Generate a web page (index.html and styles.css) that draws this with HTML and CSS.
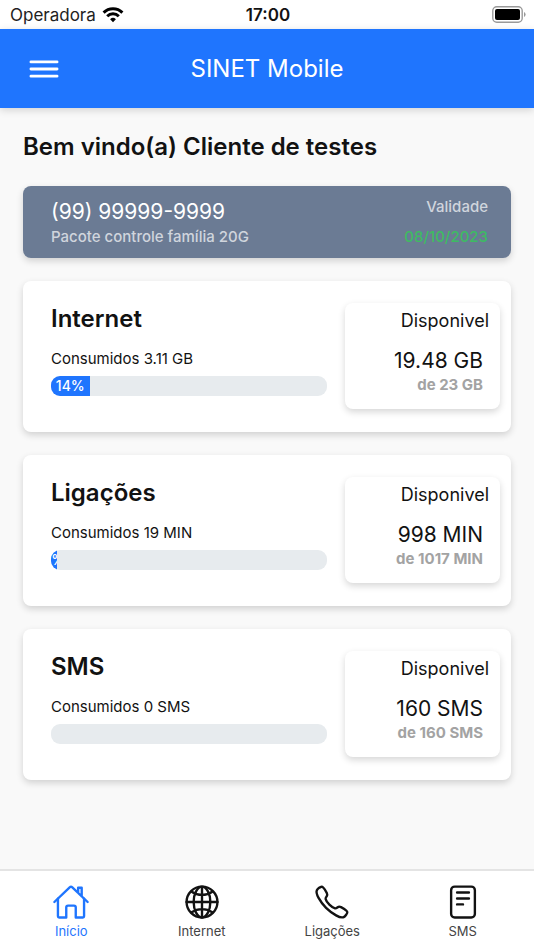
FILE: index.html
```html
<!DOCTYPE html>
<html lang="pt-BR">
<head>
<meta charset="utf-8">
<meta name="viewport" content="width=device-width, initial-scale=1">
<title>SINET Mobile</title>
<link rel="stylesheet" href="styles.css">
</head>
<body>
<div class="status">
  <span class="carrier">Operadora
    <svg class="wifi" viewBox="0 0 22 16" aria-hidden="true"><path d="M1.6 5.6a13.4 13.4 0 0 1 18.8 0M5.2 9.2a8.3 8.3 0 0 1 11.6 0"/><path class="dot" d="M11 15.2l-2.9-2.9a4.1 4.1 0 0 1 5.8 0z"/></svg>
  </span>
  <time class="clock">17:00</time>
  <svg class="battery" viewBox="0 0 34 17" aria-hidden="true"><rect class="shell" x="0.8" y="0.8" width="29.4" height="15.4" rx="4"/><rect x="3" y="3" width="25" height="11" rx="2"/><path class="cap" d="M32 6v5q1.6-.6 1.6-2.5T32 6z"/></svg>
</div>
<header class="toolbar">
  <button class="menu" type="button" aria-label="Menu"><svg class="icon" viewBox="0 0 512 512" aria-hidden="true"><path d="M80 160h352M80 256h352M80 352h352"/></svg></button>
  <h1>SINET Mobile</h1>
</header>
<main>
  <h2 class="welcome">Bem vindo(a) Cliente de testes</h2>
  <section class="plan">
    <div><p class="phone">(99) 99999-9999</p><p class="package">Pacote controle família 20G</p></div>
    <div class="validity"><p>Validade</p><p class="date">08/10/2023</p></div>
  </section>
  <section class="card">
    <div class="usage">
      <h2>Internet</h2>
      <p>Consumidos 3.11 GB</p>
      <div class="track"><div class="bar" style="width:14%"><span>14%</span></div></div>
    </div>
    <div class="available"><p class="label">Disponivel</p><p class="amount">19.48 GB</p><p class="total">de 23 GB</p></div>
  </section>
  <section class="card">
    <div class="usage">
      <h2>Ligações</h2>
      <p>Consumidos 19 MIN</p>
      <div class="track"><div class="bar" style="width:2%"><span>2%</span></div></div>
    </div>
    <div class="available"><p class="label">Disponivel</p><p class="amount">998 MIN</p><p class="total">de 1017 MIN</p></div>
  </section>
  <section class="card">
    <div class="usage">
      <h2>SMS</h2>
      <p>Consumidos 0 SMS</p>
      <div class="track"></div>
    </div>
    <div class="available"><p class="label">Disponivel</p><p class="amount">160 SMS</p><p class="total">de 160 SMS</p></div>
  </section>
</main>
<nav class="tabs">
  <a class="active" href="#inicio" aria-current="page"><svg class="icon" viewBox="0 0 512 512" aria-hidden="true"><path d="M80 212v236a16 16 0 0016 16h96V328a24 24 0 0124-24h80a24 24 0 0124 24v136h96a16 16 0 0016-16V212"/><path d="M480 256L266.89 52c-5-5.28-16.69-5.34-21.78 0L32 256M400 179V64h-48v69"/></svg>Início</a>
  <a href="#internet"><svg class="icon" viewBox="0 0 512 512" aria-hidden="true"><circle cx="256" cy="256" r="208"/><path d="M256 48c-58.07 0-112.67 93.31-112.67 208S197.93 464 256 464s112.67-93.31 112.67-208S314.07 48 256 48zM117.33 117.33c38.24 27.15 86.38 43.34 138.67 43.34s100.43-16.19 138.67-43.34M394.67 394.67c-38.24-27.15-86.38-43.34-138.67-43.34s-100.43 16.19-138.67 43.34M256 48v416M464 256H48"/></svg>Internet</a>
  <a href="#ligacoes"><svg class="icon" viewBox="0 0 512 512" aria-hidden="true"><path d="M451 374c-15.88-16-54.34-39.35-73-48.76-24.3-12.24-26.3-13.24-45.4.95-12.74 9.47-21.21 17.93-36.12 14.75s-47.31-21.11-75.68-49.39-47.34-61.62-50.53-76.48 5.41-23.23 14.79-36c13.22-18 12.22-21 .92-45.3-8.81-18.9-32.84-57-48.9-72.8C119.9 44 119.9 47 108.83 51.6A160.15 160.15 0 0083 65.37C67 76 58.12 84.83 51.91 98.1s-9 44.38 23.07 102.64 54.57 88.05 101.14 134.49S258.5 406.64 310.85 436c64.76 36.27 89.6 29.2 102.91 23s22.18-15 32.83-31a159.09 159.09 0 0013.8-25.8C465 391.17 468 391.17 451 374z"/></svg>Ligações</a>
  <a href="#sms"><svg class="icon" viewBox="0 0 512 512" aria-hidden="true"><rect x="96" y="48" width="320" height="416" rx="48"/><path d="M176 128h160M176 208h160M176 288h80"/></svg>SMS</a>
</nav>
</body>
</html>
```
FILE: styles.css
```css
* { box-sizing: border-box; margin: 0; padding: 0; }

body {
  display: flex;
  flex-direction: column;
  min-height: 100vh;
  background: #f9f9f9;
  color: #121212;
  font-family: Inter, "Liberation Sans", sans-serif;
}

.status {
  display: grid;
  grid-template-columns: 1fr auto 1fr;
  align-items: center;
  height: 29px;
  padding: 0 8px 0 10px;
  background: #fff;
  font-size: 17px;
}
.carrier { display: flex; align-items: center; gap: 6px; color: #222; }
.wifi { width: 22px; height: 16px; fill: none; stroke: #000; stroke-width: 3; }
.wifi .dot { fill: #000; stroke: none; }
.clock { font-weight: 600; }
.battery { width: 34px; height: 17px; justify-self: end; }
.battery .shell { fill: none; stroke: #999; stroke-width: 1.4; }
.battery .cap { fill: #999; }

.toolbar {
  display: grid;
  grid-template-columns: 1fr auto 1fr;
  align-items: center;
  height: 79px;
  padding: 0 25px;
  background: #1f75fe;
  color: #fff;
  box-shadow: 0 2px 8px rgba(0, 0, 0, 0.16);
}
.toolbar h1 { font-size: 24px; font-weight: 400; line-height: 32px; }
.menu { width: 38px; height: 38px; border: 0; background: none; color: inherit; }

.icon {
  display: block;
  width: 38px;
  height: 38px;
  fill: none;
  stroke: currentColor;
  stroke-width: 32;
  stroke-linecap: round;
  stroke-linejoin: round;
}
.menu .icon { stroke-width: 38; }

main {
  display: flex;
  flex: 1;
  flex-direction: column;
  gap: 23px;
  padding: 23px;
}
.welcome { font-size: 24px; font-weight: 600; line-height: 32px; }

.plan, .card, .available {
  border-radius: 8px;
  box-shadow: 0 3px 7px rgba(0, 0, 0, 0.16);
}
.plan {
  display: flex;
  justify-content: space-between;
  padding: 11px 23px 11px 28px;
  background: #6b7b94;
  color: #d0d5dd;
  font-size: 15px;
  font-weight: 500;
  line-height: 20px;
}
.phone { color: #fff; font-size: 21px; font-weight: 400; line-height: 30px; }
.validity { display: flex; flex-direction: column; gap: 10px; text-align: right; }
.date { color: #3dbb62; }

.card {
  display: grid;
  grid-template-columns: 1fr 155px;
  gap: 18px;
  padding: 22px 11px 23px 28px;
  background: #fff;
}
.usage { font-size: 15px; line-height: 20px; }
.usage h2 { margin-bottom: 14px; font-size: 24px; font-weight: 600; line-height: 32px; }
.track {
  height: 20px;
  margin-top: 7px;
  overflow: hidden;
  border-radius: 9px;
  background: #e7ebee;
}
.bar {
  display: flex;
  justify-content: center;
  height: 100%;
  overflow: hidden;
  background: #1f75fe;
  color: #fff;
  font-size: 14px;
  font-weight: 500;
}

.available { padding: 4px 17px 14px; text-align: right; }
.label { margin-right: -6px; font-size: 18px; line-height: 28px; }
.amount { margin-top: 12px; font-size: 21px; line-height: 28px; }
.total { color: #a3a3a3; font-size: 15px; font-weight: 700; line-height: 20px; }

.tabs {
  display: grid;
  grid-template-columns: repeat(4, 1fr);
  padding: 12px 6px 11px;
  border-top: 2px solid #e4e4e4;
  background: #fff;
}
.tabs a {
  display: flex;
  flex-direction: column;
  align-items: center;
  gap: 2px;
  color: #444;
  font-size: 13px;
  line-height: 16px;
  text-decoration: none;
}
.tabs .icon { color: #121212; }
.tabs .active, .tabs .active .icon { color: #1f75fe; }
```
